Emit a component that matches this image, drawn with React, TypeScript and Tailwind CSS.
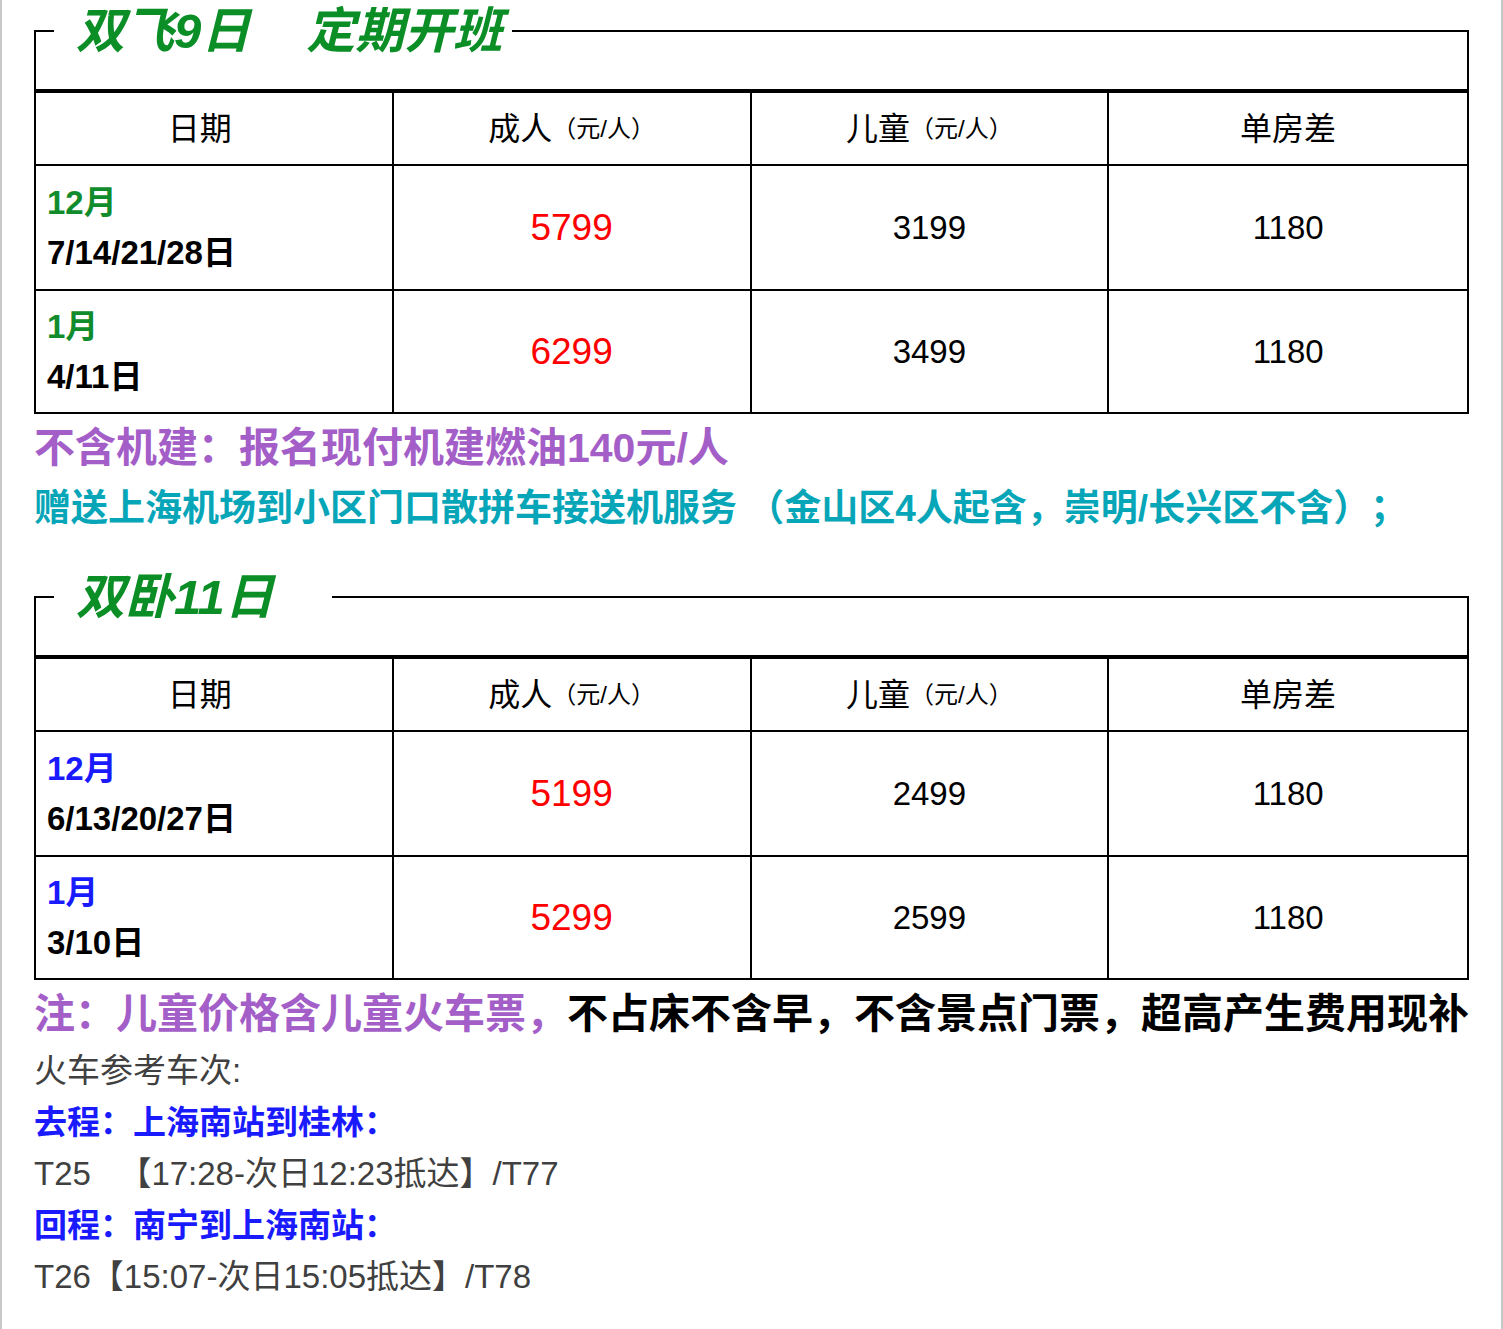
import React from "react";

type Row = {
  month: string;
  days: string;
  adult: string;
  child: string;
  single: string;
};

const FONT = "font-['Liberation_Sans','Noto_Sans_CJK_SC',sans-serif]";

const SECTION_ONE: Row[] = [
  { month: "12月", days: "7/14/21/28日", adult: "5799", child: "3199", single: "1180" },
  { month: "1月", days: "4/11日", adult: "6299", child: "3499", single: "1180" },
];

const SECTION_TWO: Row[] = [
  { month: "12月", days: "6/13/20/27日", adult: "5199", child: "2499", single: "1180" },
  { month: "1月", days: "3/10日", adult: "5299", child: "2599", single: "1180" },
];

function PriceTable({
  legend,
  rows,
  monthColor,
}: {
  legend: React.ReactNode;
  rows: Row[];
  monthColor: string;
}) {
  return (
    <fieldset className="m-0 min-w-0 border-2 border-black p-0">
      <legend className="ml-[18px] pl-[22px] pr-[10px] text-[49px] leading-[48px] font-bold italic text-[#0b8e26]">
        {legend}
      </legend>
      <div className="mt-[34px] border-t-4 border-black">
        <div className="grid h-[73px] grid-cols-4 border-b-2 border-black text-[32px] text-black">
          <div className="flex items-center justify-center border-r-2 border-black pr-[28px]">
            日期
          </div>
          <div className="flex items-center justify-center border-r-2 border-black">
            成人<span className="text-[24px]">（元/人）</span>
          </div>
          <div className="flex items-center justify-center border-r-2 border-black">
            儿童<span className="text-[24px]">（元/人）</span>
          </div>
          <div className="flex items-center justify-center">单房差</div>
        </div>
        {rows.map((row, i) => (
          <div
            key={`row-${i}`}
            className={
              i === 0
                ? "grid h-[125px] grid-cols-4 border-b-2 border-black"
                : "grid h-[121px] grid-cols-4"
            }
          >
            <div className="flex flex-col justify-center border-r-2 border-black pl-[11px] text-[33px] leading-[50px] font-bold">
              <div className={monthColor}>{row.month}</div>
              <div className="text-black">{row.days}</div>
            </div>
            <div className="flex items-center justify-center border-r-2 border-black text-[37px] text-[#ff0000]">
              {row.adult}
            </div>
            <div className="flex items-center justify-center border-r-2 border-black text-[33px] text-black">
              {row.child}
            </div>
            <div className="flex items-center justify-center text-[33px] text-black">
              {row.single}
            </div>
          </div>
        ))}
      </div>
    </fieldset>
  );
}

export default function App() {
  return (
    <div
      className={`${FONT} min-h-[1329px] w-[1503px] border-x-2 border-[#c8c8c8] bg-white px-[32px] pt-[7px] [text-spacing-trim:space-all]`}
    >
      <PriceTable
        legend={
          <>
            <span>双飞9日</span>
            <span className="ml-[56px]">定期开班</span>
          </>
        }
        rows={SECTION_ONE}
        monthColor="text-[#118c2c]"
      />

      <p className="mt-[4px] text-[41px] leading-[60px] font-bold whitespace-nowrap text-[#a45ec8]">
        不含机建：报名现付机建燃油140元/人
      </p>
      <p className="mt-[1px] text-[37px] leading-[60px] font-bold whitespace-nowrap text-[#06a6b8]">
        赠送上海机场到小区门口散拼车接送机服务 （金山区4人起含，崇明/长兴区不含）；
      </p>

      <div className="mt-[34px]">
        <PriceTable
          legend={<span className="pr-[48px]">双卧11日</span>}
          rows={SECTION_TWO}
          monthColor="text-[#1a1aff]"
        />
      </div>

      <p className="mt-[4px] text-[41px] leading-[60px] font-bold whitespace-nowrap">
        <span className="text-[#a45ec8]">注：儿童价格含儿童火车票，</span>
        <span className="text-black">不占床不含早，不含景点门票，超高产生费用现补</span>
      </p>

      <div className="mt-[1px] text-[33px] leading-[51.5px] whitespace-nowrap text-[#404040]">
        <p>火车参考车次:</p>
        <p className="font-bold text-[#1a1aff]">去程：上海南站到桂林：</p>
        <p>T25{"\u00a0\u00a0 "}【17:28-次日12:23抵达】/T77</p>
        <p className="font-bold text-[#1a1aff]">回程：南宁到上海南站：</p>
        <p>T26【15:07-次日15:05抵达】/T78</p>
      </div>
    </div>
  );
}
